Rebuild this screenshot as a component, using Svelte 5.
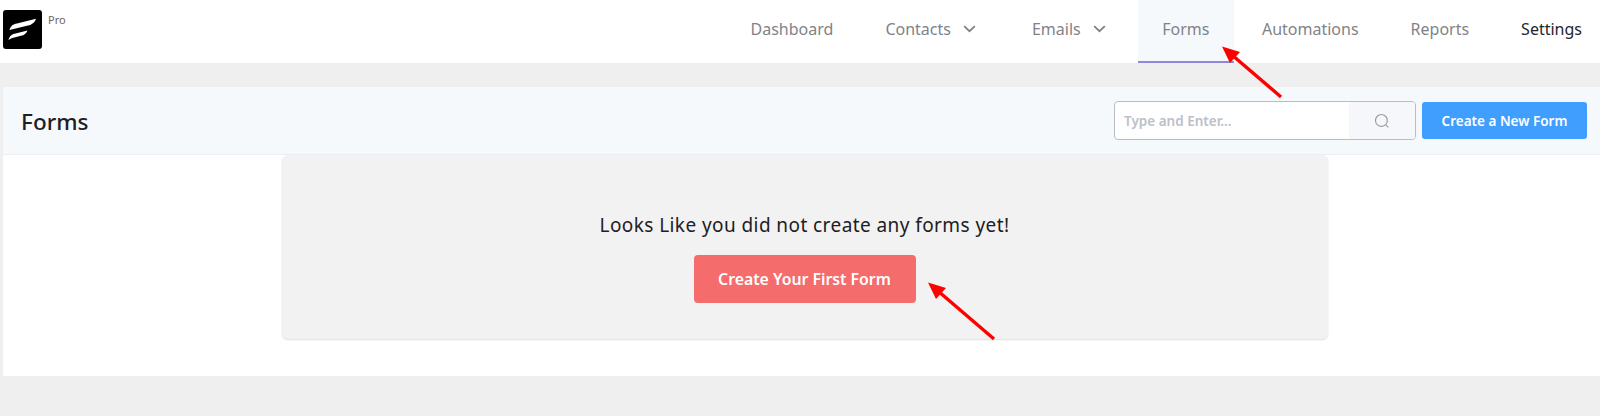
<script>
  const navItems = [
    { label: 'Dashboard' },
    { label: 'Contacts', caret: true },
    { label: 'Emails', caret: true },
    { label: 'Forms', active: true },
    { label: 'Automations' },
    { label: 'Reports' },
    { label: 'Settings', dark: true }
  ];
</script>

<div class="page">
  <header class="topbar">
    <div class="brand">
      <svg class="logo" width="39" height="39" viewBox="0 0 39 39">
        <rect width="39" height="39" rx="3" fill="#000" />
        <path d="M6.5 20 C8 15.5 10 14.5 14 13.6 L33 8.8 C31.5 13 29 14.6 25 15.6 Z" fill="#fff" />
        <path d="M5.5 30 C6.5 26 8.5 24.6 11.5 23.8 L24.5 20.4 C23.5 23.4 21 25 18 25.8 L8.5 28.2 Z" fill="#fff" />
      </svg>
      <span class="pro">Pro</span>
    </div>
    <nav class="menu">
      {#each navItems as item}
        <a class="item" class:active={item.active} class:dark={item.dark} class:has-caret={item.caret} href="#top">
          {item.label}
          {#if item.caret}
            <svg class="caret" width="13" height="8" viewBox="0 0 13 8">
              <path d="M1.2 1.2 L6.5 6.2 L11.8 1.2" fill="none" stroke="#7e8288" stroke-width="1.8" />
            </svg>
          {/if}
        </a>
      {/each}
    </nav>
  </header>

  <main class="panel">
    <div class="panel-head">
      <h1>Forms</h1>
      <div class="actions">
        <div class="search">
          <input type="text" placeholder="Type and Enter..." />
          <span class="search-btn">
            <svg width="16" height="16" viewBox="0 0 16 16">
              <circle cx="7.4" cy="7.4" r="5.9" fill="none" stroke="#9a9fa6" stroke-width="1.2" />
              <path d="M11.8 11.8 L14.4 14.4" stroke="#9a9fa6" stroke-width="1.2" />
            </svg>
          </span>
        </div>
        <button class="new-form">Create a New Form</button>
      </div>
    </div>
    <div class="panel-body">
      <div class="empty">
        <p>Looks Like you did not create any forms yet!</p>
        <button class="first-form">Create Your First Form</button>
      </div>
    </div>
  </main>

  <!-- annotation arrows drawn over the screenshot -->
  <svg class="arrows" width="1600" height="416" viewBox="0 0 1600 416">
    <path d="M1281 97 L1232 55" stroke="#f00" stroke-width="3.4" />
    <path d="M1222 46.5 L1240 52 L1230 63 Z" fill="#f00" />
    <path d="M994 339 L938 291" stroke="#f00" stroke-width="3.4" />
    <path d="M928 282.5 L946 288 L936 299 Z" fill="#f00" />
  </svg>
</div>

<style>
  :global(body) {
    margin: 0;
    background: #efefef;
  }
  .page {
    position: relative;
    height: 416px;
    overflow: hidden;
    background: #efefef;
    font-family: 'Noto Sans', 'Open Sans', sans-serif;
  }
  .topbar {
    display: flex;
    justify-content: space-between;
    height: 63px;
    background: #fff;
  }
  .brand {
    display: flex;
    align-items: flex-start;
    padding: 10px 0 0 3px;
  }
  .logo {
    display: block;
  }
  .pro {
    margin: 3px 0 0 6px;
    font-size: 11px;
    line-height: 14px;
    color: #6f6460;
  }
  .menu {
    display: flex;
  }
  .item {
    display: flex;
    align-items: center;
    box-sizing: border-box;
    height: 63px;
    padding: 0 26px 4px;
    border-bottom: 2px solid transparent;
    font-size: 16px;
    color: #7f8389;
    text-decoration: none;
    white-space: nowrap;
  }
  .item.has-caret {
    padding-right: 30px;
  }
  .item.active {
    margin: 0 2px;
    padding: 0 24.5px 4px;
    background: #f6f9fc;
    border-bottom-color: #9387dc;
  }
  .item.dark {
    padding-right: 18px;
    color: #23262b;
  }
  .caret {
    margin-left: 12px;
  }
  .panel {
    margin: 24px 0 0 3px;
    background: #fff;
    height: 289px;
  }
  .panel-head {
    display: flex;
    align-items: center;
    justify-content: space-between;
    box-sizing: border-box;
    height: 68px;
    padding: 0 13px 0 18px;
    background: #f6f9fc;
    border-bottom: 1px solid #ebeef3;
  }
  h1 {
    margin: 1px 0 0;
    font-size: 22.5px;
    font-weight: 500;
    color: #1c2024;
  }
  .actions {
    display: flex;
    align-items: center;
    gap: 6px;
  }
  .search {
    display: flex;
    box-sizing: border-box;
    width: 302px;
    height: 39px;
    background: #fff;
    border: 1px solid #b9bcc3;
    border-radius: 4px;
    overflow: hidden;
  }
  input {
    flex: 1;
    min-width: 0;
    padding: 0 9px;
    border: 0;
    outline: 0;
    font: 600 13.5px 'Noto Sans', sans-serif;
    background: transparent;
  }
  input::placeholder {
    color: #bcc0c8;
    opacity: 1;
  }
  .search-btn {
    display: flex;
    align-items: center;
    justify-content: center;
    width: 66px;
    background: #f5f7fa;
  }
  button {
    border: 0;
    color: #fff;
    font-family: inherit;
    font-weight: 600;
    cursor: pointer;
  }
  .new-form {
    width: 165px;
    height: 37px;
    font-size: 13.5px;
    background: #409eff;
    border-radius: 3px;
  }
  .panel-body {
    display: flex;
    justify-content: center;
    padding-left: 6px;
  }
  .empty {
    display: flex;
    flex-direction: column;
    align-items: center;
    box-sizing: border-box;
    width: 1046px;
    height: 184px;
    padding-top: 56px;
    background: #f2f2f2;
    border-radius: 6px;
    box-shadow: 0 1px 2px rgba(0, 0, 0, 0.14);
  }
  p {
    margin: 0 0 16px;
    font-size: 19px;
    line-height: 28px;
    letter-spacing: 0.42px;
    color: #1c2024;
  }
  .first-form {
    width: 222px;
    height: 48px;
    font-size: 15.8px;
    background: #f56c6c;
    border-radius: 4px;
  }
  .arrows {
    position: absolute;
    top: 0;
    left: 0;
    pointer-events: none;
  }
</style>
